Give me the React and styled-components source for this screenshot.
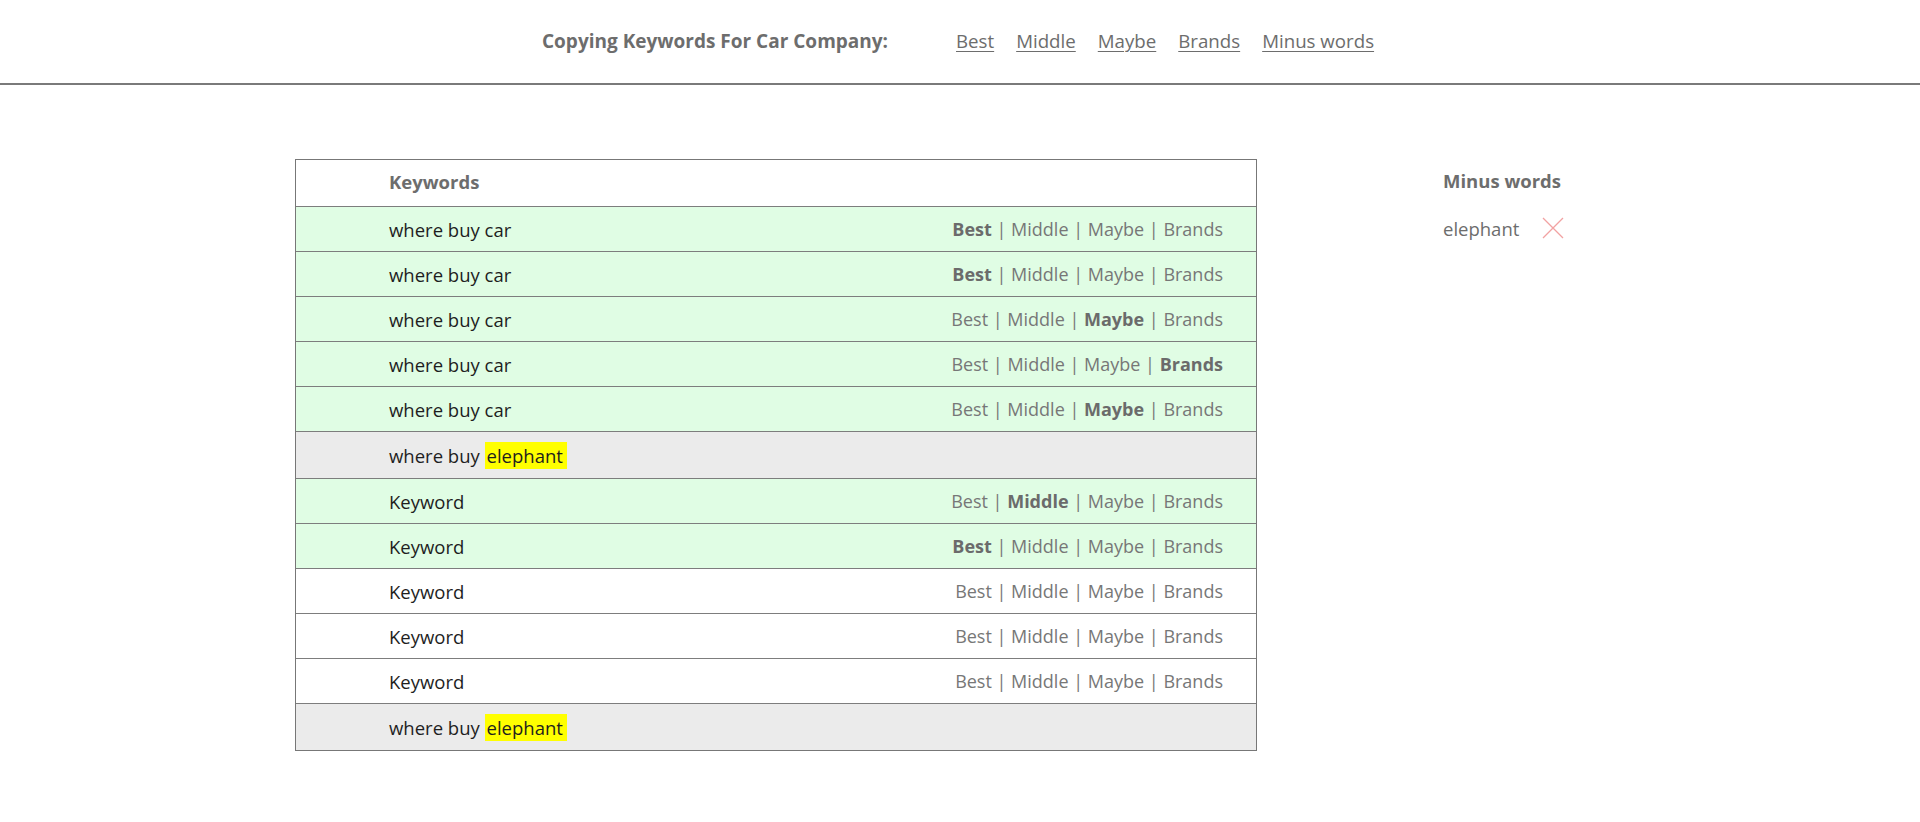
import React from "react";
import styled, { createGlobalStyle } from "styled-components";

const Global = createGlobalStyle`
  html, body { margin: 0; padding: 0; background: #fff; }
  body { font-family: "Open Sans", "Noto Sans", sans-serif; color: #222; }
`;

const Header = styled.header`
  height: 85px;
  border-bottom: 2px solid #7a7a7a;
  display: flex;
  align-items: center;
  padding: 0 0 2px 542px;
  box-sizing: border-box;
`;

const Title = styled.h1`
  margin: 0 68px 0 0;
  font-size: 19px;
  font-weight: 700;
  color: #6d6d6d;
  white-space: nowrap;
`;

const Nav = styled.nav`
  display: flex;
  gap: 22px;
`;

const NavLink = styled.a`
  font-size: 18.7px;
  color: #6d6d6d;
  text-decoration: underline;
  text-underline-offset: 3px;
  text-decoration-thickness: 1px;
  cursor: pointer;
  white-space: nowrap;
`;

const Main = styled.main`
  display: flex;
  align-items: flex-start;
  padding: 74px 0 0 295px;
  gap: 186px;
`;

const Table = styled.div`
  width: 962px;
  border: 1px solid #777;
  box-sizing: border-box;
`;

const Row = styled.div`
  display: flex;
  align-items: center;
  justify-content: space-between;
  min-height: ${(p) => p.$h || 45}px;
  padding: 0 33px 0 93px;
  box-sizing: border-box;
  background: ${(p) => p.$bg};
  & + & { border-top: 1px solid #7d7d7d; }
`;

const HeadCell = styled.div`
  font-weight: 700;
  color: #6d6d6d;
  font-size: 18.5px;
  padding-bottom: 4px;
`;

const Keyword = styled.div`
  font-size: 18.5px;
  color: #1e1e1e;
`;

const Mark = styled.span`
  background: #ffff00;
  padding: 0 4px 0 2px;
  display: inline-block;
  line-height: 27px;
`;

const Choices = styled.div`
  font-size: 18px;
  color: #777;
`;

const Choice = styled.span`
  font-weight: ${(p) => (p.$active ? 700 : 400)};
  color: ${(p) => (p.$active ? "#6b6b6b" : "#777")};
`;

const Side = styled.aside`
  display: flex;
  flex-direction: column;
`;

const SideTitle = styled.div`
  font-size: 18.5px;
  font-weight: 700;
  color: #6d6d6d;
  height: 46px;
  padding-bottom: 4px;
  box-sizing: border-box;
  display: flex;
  align-items: center;
`;

const MinusItem = styled.div`
  display: flex;
  align-items: center;
  gap: 23px;
  height: 46px;
  font-size: 18.5px;
  color: #6d6d6d;
`;

const RemoveBtn = styled.button`
  border: 0;
  background: none;
  padding: 0;
  width: 22px;
  height: 22px;
  cursor: pointer;
  display: flex;
`;

const CATS = ["Best", "Middle", "Maybe", "Brands"];

const rows = [
  { text: "where buy car", active: "Best", bg: "#e0fde4" },
  { text: "where buy car", active: "Best", bg: "#e0fde4" },
  { text: "where buy car", active: "Maybe", bg: "#e0fde4" },
  { text: "where buy car", active: "Brands", bg: "#e0fde4" },
  { text: "where buy car", active: "Maybe", bg: "#e0fde4" },
  { minus: true, bg: "#ebebeb" },
  { text: "Keyword", active: "Middle", bg: "#e0fde4" },
  { text: "Keyword", active: "Best", bg: "#e0fde4" },
  { text: "Keyword", active: null, bg: "#fff" },
  { text: "Keyword", active: null, bg: "#fff" },
  { text: "Keyword", active: null, bg: "#fff" },
  { minus: true, bg: "#ebebeb" },
];

export default function App() {
  return (
    <>
      <Global />
      <Header>
        <Title>Copying Keywords For Car Company:</Title>
        <Nav>
          {["Best", "Middle", "Maybe", "Brands", "Minus words"].map((l) => (
            <NavLink key={l}>{l}</NavLink>
          ))}
        </Nav>
      </Header>
      <Main>
        <Table>
          <Row $bg="#fff" $h={46}>
            <HeadCell>Keywords</HeadCell>
          </Row>
          {rows.map((r, i) =>
            r.minus ? (
              <Row key={i} $bg={r.bg} $h={47}>
                <Keyword>
                  where buy <Mark>elephant</Mark>
                </Keyword>
              </Row>
            ) : (
              <Row key={i} $bg={r.bg}>
                <Keyword>{r.text}</Keyword>
                <Choices>
                  {CATS.map((c, j) => (
                    <React.Fragment key={c}>
                      {j > 0 && " | "}
                      <Choice $active={r.active === c}>{c}</Choice>
                    </React.Fragment>
                  ))}
                </Choices>
              </Row>
            )
          )}
        </Table>
        <Side>
          <SideTitle>Minus words</SideTitle>
          <MinusItem>
            elephant
            <RemoveBtn aria-label="remove">
              <svg width="22" height="22" viewBox="0 0 22 22">
                <path d="M1 1 L21 21 M21 1 L1 21" stroke="#f2a2a2" strokeWidth="1.3" />
              </svg>
            </RemoveBtn>
          </MinusItem>
        </Side>
      </Main>
    </>
  );
}
